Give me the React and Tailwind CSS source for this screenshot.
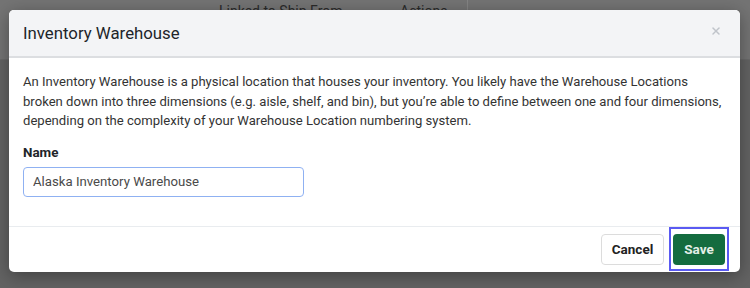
import { X } from "lucide-react";

function BackgroundTable() {
  return (
    <div className="h-[60px] bg-[#747474] border-b border-[#6a6a6a] flex text-[14px] text-[#2a2a2a]">
      <div className="w-[219px]" />
      <div className="w-[181px] pt-[1px]">Linked to Ship From</div>
      <div className="w-[68px] pt-[1px] border-r border-[#858585]">Actions</div>
      <div className="flex-1" />
    </div>
  );
}

export default function App() {
  return (
    <div className="relative h-[288px] w-[750px] overflow-hidden bg-[#636363] font-['Roboto',sans-serif]">
      <BackgroundTable />

      {/* MODAL */}
      <div className="absolute left-[9px] top-[10px] w-[731px] h-[262px] bg-white rounded-[5px] shadow-[0_4px_18px_rgba(0,0,0,0.35)] flex flex-col overflow-hidden">
        {/* HEADER */}
        <div className="h-[48px] shrink-0 bg-[#f3f4f6] border-b-2 border-[#dcdee1] flex items-center justify-between pl-[14px] pr-[18px]">
          <h2 className="text-[16.8px] text-[#212529] leading-none pt-[1px]">Inventory Warehouse</h2>
          <X size={12} strokeWidth={3} className="text-[#c0c4ca] mb-[5px]" />
        </div>

        {/* BODY */}
        <div className="flex-1 px-[14px] pt-[14px]">
          <p className="text-[13.1px] leading-[19.5px] text-[#333333]">
            An Inventory Warehouse is a physical location that houses your inventory. You likely have the Warehouse Locations
            broken down into three dimensions (e.g. aisle, shelf, and bin), but you’re able to define between one and four dimensions,
            depending on the complexity of your Warehouse Location numbering system.
          </p>
          <label className="block mt-[12px] text-[13.4px] font-bold text-[#212529] leading-[20px]">Name</label>
          <input
            type="text"
            defaultValue="Alaska Inventory Warehouse"
            className="mt-[4px] w-[281px] h-[30px] px-[9px] rounded-[4px] border border-[#8fb1f2] text-[13.2px] text-[#4a4a4a] outline-none"
          />
        </div>

        {/* FOOTER */}
        <div className="h-[46px] shrink-0 border-t border-[#e9ecef] flex items-center justify-end gap-[5px] pr-[11px]">
          <button className="h-[31px] w-[63px] rounded-[4px] border border-[#dcdcdc] bg-white text-[13.5px] font-bold text-[#222]">
            Cancel
          </button>
          <div className="px-[2px] pt-[5px] pb-[4px] border-2 border-[#5a5af2] -mt-[1px]">
            <button className="block h-[31px] w-[52px] rounded-[4px] bg-[#146c3f] text-[13.5px] font-bold text-[#e4efe8]">
              Save
            </button>
          </div>
        </div>
      </div>
    </div>
  );
}
